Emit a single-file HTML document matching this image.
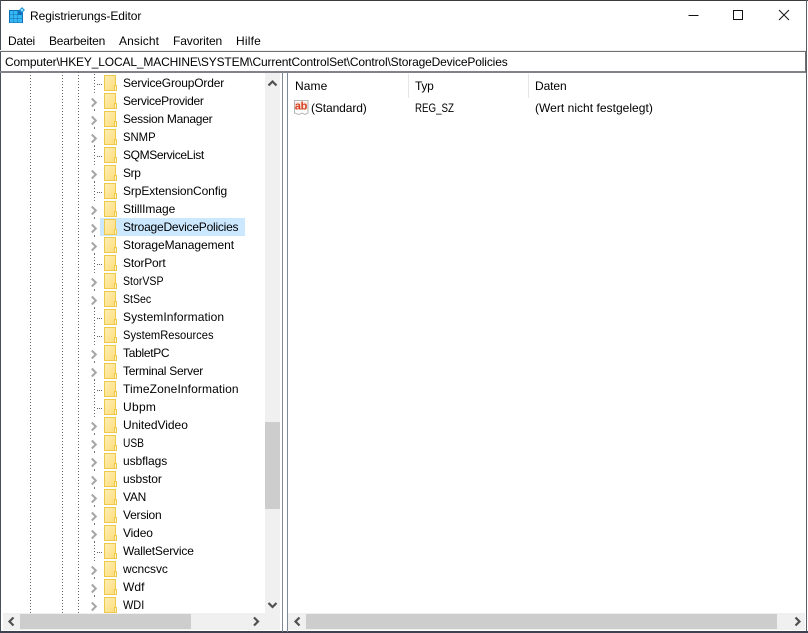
<!DOCTYPE html>
<html lang="de"><head><meta charset="utf-8"><title>Registrierungs-Editor</title>
<style>
html,body{margin:0;padding:0}
body{width:808px;height:633px;position:relative;overflow:hidden;background:#fff;font:12px "Liberation Sans",sans-serif;color:#000}
.a{position:absolute;white-space:nowrap}
.v{position:absolute;top:72px;height:541px;width:1px;background:repeating-linear-gradient(to bottom,#666 0 1px,transparent 1px 3px)}
#tree{position:absolute;left:2px;top:72px;width:263px;height:541px;overflow:hidden}
.r{position:absolute;left:0;height:18px;width:263px}
.r svg{position:absolute;left:0;top:0}
.r span{position:absolute;left:121px;top:0;line-height:18px;white-space:nowrap;transform-origin:left center}
.s{position:absolute;left:98px;top:0;width:145px;height:18px;background:#cce8ff}
</style></head><body>
<svg width="0" height="0" style="position:absolute"><defs>
<linearGradient id="g" x1="0" y1="0" x2="1" y2="1"><stop offset="0" stop-color="#ffefb5"/><stop offset="1" stop-color="#fddc7a"/></linearGradient>
<symbol id="f" viewBox="0 0 130 18" width="130" height="18"><path d="M102.500 1.500h11v15h-11z" fill="url(#g)" stroke="#edc94c"/><path d="M112.500 11.500h2v5h-2z" fill="#fff1bd" stroke="#edc94c"/></symbol>
<symbol id="c" viewBox="0 0 130 18" width="130" height="18"><path d="M89.800 6.500l4 4-4 4" fill="none" stroke="#a6a6a6" stroke-width="2"/><path d="M92 0h1v1h-1zM92 17h1v1h-1z" fill="#777"/></symbol>
<symbol id="l" viewBox="0 0 130 18" width="130" height="18"><path d="M92 0h1v1h-1zM92 3h1v1h-1zM92 6h1v1h-1zM92 9h1v1h-1zM92 12h1v1h-1zM92 15h1v1h-1zM95 10h1v1h-1zM97 10h1v1h-1zM99 10h1v1h-1z" fill="#666"/></symbol>
</defs></svg>

<div class="a" style="left:0;top:0;width:808px;height:1px;background:#3a3a3a"></div>
<div class="a" style="left:0;top:0;width:1px;height:633px;background:#4a4f5c"></div>
<div class="a" style="left:806px;top:0;width:1px;height:632px;background:#5a5f6a"></div>
<div class="a" style="left:0;top:631px;width:808px;height:2px;background:#3e4250"></div>

<svg class="a" style="left:9px;top:7px" width="17" height="17" viewBox="0 0 17 17">
<rect x="0" y="3" width="14" height="13" fill="#0f6fb8"/>
<g fill="#35b8f2"><rect x="1" y="4" width="3.500" height="3.500"/><rect x="5" y="4" width="3.500" height="3.500"/><rect x="1" y="8" width="3.500" height="3.500"/><rect x="5" y="8" width="3.500" height="3.500"/><rect x="9" y="8" width="4" height="3.500"/><rect x="1" y="12" width="3.500" height="3.500"/><rect x="5" y="12" width="3.500" height="3.500"/><rect x="9" y="12" width="4" height="3.500"/></g>
<path d="M13 0l3 3-3 3-3-3z" fill="#2e9fd8"/><rect x="12" y="2" width="2" height="2" fill="#8fdcff"/>
</svg>
<div class="a" style="left:30px;top:8px;line-height:16px;letter-spacing:-.07px">Registrierungs-Editor</div>
<svg class="a" style="left:680px;top:5px" width="120" height="20" viewBox="0 0 120 20" fill="none" stroke="#111">
<path d="M8.500 10.500h10"/><rect x="53.500" y="5.500" width="9" height="9"/><path d="M99 5l10 10M109 5l-10 10"/></svg>

<div class="a" style="left:8px;top:34px;line-height:15px;letter-spacing:-.2px">Datei</div>
<div class="a" style="left:49px;top:34px;line-height:15px;letter-spacing:-.2px">Bearbeiten</div>
<div class="a" style="left:119px;top:34px;line-height:15px;letter-spacing:.1px">Ansicht</div>
<div class="a" style="left:173px;top:34px;line-height:15px;letter-spacing:-.1px">Favoriten</div>
<div class="a" style="left:236px;top:34px;line-height:15px;letter-spacing:.2px">Hilfe</div>

<div class="a" style="left:0;top:50px;width:806px;height:1px;background:#eee"></div>
<div class="a" style="left:0;top:51px;width:806px;height:1px;background:#707070"></div>
<div class="a" style="left:0;top:71px;width:806px;height:2px;background:#808488"></div>
<div class="a" style="left:805px;top:51px;width:1px;height:21px;background:#707070"></div>
<div class="a" style="left:5px;top:55px;line-height:15px;letter-spacing:-.15px">Computer\HKEY_LOCAL_MACHINE\SYSTEM\CurrentControlSet\Control\StorageDevicePolicies</div>

<div class="v" style="left:30px"></div><div class="v" style="left:62px"></div><div class="v" style="left:78px"></div>

<div id="tree">
<div class="r" style="top:2px"><svg width="130" height="18"><use href="#l"/><use href="#f"/></svg><span style="letter-spacing:-.175px">ServiceGroupOrder</span></div>
<div class="r" style="top:20px"><svg width="130" height="18"><use href="#c"/><use href="#f"/></svg><span style="letter-spacing:-.27px">ServiceProvider</span></div>
<div class="r" style="top:38px"><svg width="130" height="18"><use href="#c"/><use href="#f"/></svg><span style="letter-spacing:-.27px">Session Manager</span></div>
<div class="r" style="top:56px"><svg width="130" height="18"><use href="#c"/><use href="#f"/></svg><span style="transform:scaleX(.94)">SNMP</span></div>
<div class="r" style="top:74px"><svg width="130" height="18"><use href="#l"/><use href="#f"/></svg><span style="letter-spacing:-.37px">SQMServiceList</span></div>
<div class="r" style="top:92px"><svg width="130" height="18"><use href="#c"/><use href="#f"/></svg><span style="letter-spacing:-.4px">Srp</span></div>
<div class="r" style="top:110px"><svg width="130" height="18"><use href="#l"/><use href="#f"/></svg><span style="letter-spacing:-.11px">SrpExtensionConfig</span></div>
<div class="r" style="top:128px"><svg width="130" height="18"><use href="#c"/><use href="#f"/></svg><span style="letter-spacing:-.04px">StillImage</span></div>
<div class="r" style="top:146px"><div class="s"></div><svg width="130" height="18"><use href="#c"/><use href="#f"/></svg><span style="letter-spacing:-.225px">StroageDevicePolicies</span></div>
<div class="r" style="top:164px"><svg width="130" height="18"><use href="#c"/><use href="#f"/></svg><span style="letter-spacing:-.06px">StorageManagement</span></div>
<div class="r" style="top:182px"><svg width="130" height="18"><use href="#l"/><use href="#f"/></svg><span style="letter-spacing:-.19px">StorPort</span></div>
<div class="r" style="top:200px"><svg width="130" height="18"><use href="#c"/><use href="#f"/></svg><span style="transform:scaleX(.88)">StorVSP</span></div>
<div class="r" style="top:218px"><svg width="130" height="18"><use href="#c"/><use href="#f"/></svg><span style="transform:scaleX(.88)">StSec</span></div>
<div class="r" style="top:236px"><svg width="130" height="18"><use href="#l"/><use href="#f"/></svg><span style="letter-spacing:.06px">SystemInformation</span></div>
<div class="r" style="top:254px"><svg width="130" height="18"><use href="#l"/><use href="#f"/></svg><span style="transform:scaleX(.93)">SystemResources</span></div>
<div class="r" style="top:272px"><svg width="130" height="18"><use href="#c"/><use href="#f"/></svg><span style="letter-spacing:-.3px">TabletPC</span></div>
<div class="r" style="top:290px"><svg width="130" height="18"><use href="#c"/><use href="#f"/></svg><span style="letter-spacing:-.27px">Terminal Server</span></div>
<div class="r" style="top:308px"><svg width="130" height="18"><use href="#l"/><use href="#f"/></svg><span style="letter-spacing:.11px">TimeZoneInformation</span></div>
<div class="r" style="top:326px"><svg width="130" height="18"><use href="#l"/><use href="#f"/></svg><span style="letter-spacing:.3px">Ubpm</span></div>
<div class="r" style="top:344px"><svg width="130" height="18"><use href="#c"/><use href="#f"/></svg><span style="letter-spacing:-.03px">UnitedVideo</span></div>
<div class="r" style="top:362px"><svg width="130" height="18"><use href="#c"/><use href="#f"/></svg><span style="transform:scaleX(.85)">USB</span></div>
<div class="r" style="top:380px"><svg width="130" height="18"><use href="#c"/><use href="#f"/></svg><span style="letter-spacing:-.07px">usbflags</span></div>
<div class="r" style="top:398px"><svg width="130" height="18"><use href="#c"/><use href="#f"/></svg><span style="letter-spacing:-.08px">usbstor</span></div>
<div class="r" style="top:416px"><svg width="130" height="18"><use href="#c"/><use href="#f"/></svg><span style="letter-spacing:-.27px">VAN</span></div>
<div class="r" style="top:434px"><svg width="130" height="18"><use href="#c"/><use href="#f"/></svg><span style="letter-spacing:-.23px">Version</span></div>
<div class="r" style="top:452px"><svg width="130" height="18"><use href="#c"/><use href="#f"/></svg><span style="letter-spacing:-.14px">Video</span></div>
<div class="r" style="top:470px"><svg width="130" height="18"><use href="#l"/><use href="#f"/></svg><span style="letter-spacing:-.17px">WalletService</span></div>
<div class="r" style="top:488px"><svg width="130" height="18"><use href="#c"/><use href="#f"/></svg><span style="letter-spacing:-.08px">wcncsvc</span></div>
<div class="r" style="top:506px"><svg width="130" height="18"><use href="#c"/><use href="#f"/></svg><span style="letter-spacing:.06px">Wdf</span></div>
<div class="r" style="top:524px"><svg width="130" height="18"><use href="#c"/><use href="#f"/></svg><span style="transform:scaleX(.91)">WDI</span></div>
</div>

<div class="a" style="left:265px;top:73px;width:15px;height:540px;background:#f0f0f0"></div>
<div class="a" style="left:265px;top:422px;width:15px;height:87px;background:#cdcdcd"></div>
<svg class="a" style="left:265px;top:73px" width="15" height="540" viewBox="0 0 15 540" fill="none" stroke="#505050" stroke-width="2.200"><path d="M3.500 12.500l4-4 4 4M3.500 530l4 4 4-4"/></svg>

<div class="a" style="left:3px;top:613px;width:277px;height:17px;background:#f0f0f0"></div>
<div class="a" style="left:20px;top:614px;width:171px;height:15px;background:#cdcdcd"></div>
<svg class="a" style="left:3px;top:613px" width="277" height="17" viewBox="0 0 277 17" fill="none" stroke="#505050" stroke-width="2.200"><path d="M10.500 4.500l-4 4 4 4M251 4.500l4 4-4 4"/></svg>
<div class="a" style="left:282px;top:72px;width:1px;height:560px;background:#808a96"></div>
<div class="a" style="left:287px;top:72px;width:1px;height:560px;background:#808a96"></div>

<div class="a" style="left:295px;top:79px;line-height:15px;letter-spacing:.1px">Name</div>
<div class="a" style="left:415px;top:79px;line-height:15px;letter-spacing:-.3px">Typ</div>
<div class="a" style="left:535px;top:79px;line-height:15px;letter-spacing:-.1px">Daten</div>
<div class="a" style="left:408px;top:74px;width:1px;height:24px;background:#e5e5e5"></div>
<div class="a" style="left:528px;top:74px;width:1px;height:24px;background:#e5e5e5"></div>

<svg class="a" style="left:293px;top:99px" width="17" height="17" viewBox="0 0 17 17">
<path d="M1.500 1.500h13.500v12.500l-3 1.500-3-1.500-3 1.500-4.500-1.500z" fill="#fff" stroke="#b5b5b5"/>
<rect x="2" y="3" width="12.500" height="8" fill="#fbe6df"/>
<text x="1.800" y="10.500" font-family="Liberation Sans,sans-serif" font-size="11" font-weight="bold" fill="#d5401e" letter-spacing="-.3">ab</text>
</svg>
<div class="a" style="left:311px;top:101px;line-height:15px;letter-spacing:-.1px">(Standard)</div>
<div class="a" style="left:415px;top:101px;line-height:15px;transform:scaleX(.81);transform-origin:left center">REG_SZ</div>
<div class="a" style="left:535px;top:101px;line-height:15px;letter-spacing:.03px">(Wert nicht festgelegt)</div>

<div class="a" style="left:288px;top:613px;width:517px;height:17px;background:#f0f0f0"></div>
<div class="a" style="left:306px;top:614px;width:471px;height:15px;background:#cdcdcd"></div>
<svg class="a" style="left:288px;top:613px" width="517" height="17" viewBox="0 0 517 17" fill="none" stroke="#505050" stroke-width="2.200"><path d="M11.500 4.500l-4 4 4 4M507.500 4.500l4 4-4 4"/></svg>
</body></html>
